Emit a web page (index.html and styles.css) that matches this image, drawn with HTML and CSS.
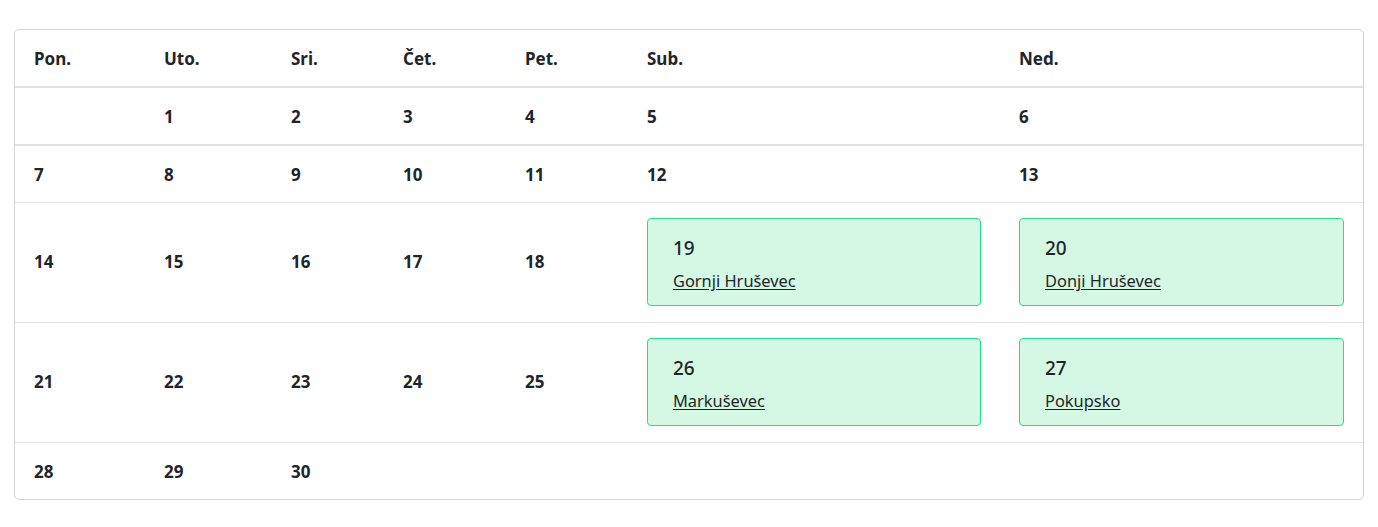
FILE: index.html
```html
<!DOCTYPE html>
<html lang="hr">
<head>
<meta charset="utf-8">
<title>Kalendar</title>
<link rel="stylesheet" href="styles.css">
</head>
<body>
<div class="card">
  <table class="cal">
    <colgroup>
      <col class="c1"><col class="c2"><col class="c3"><col class="c4"><col class="c5"><col class="c6"><col class="c7">
    </colgroup>
    <thead>
      <tr><th>Pon.</th><th>Uto.</th><th>Sri.</th><th>Čet.</th><th>Pet.</th><th>Sub.</th><th>Ned.</th></tr>
    </thead>
    <tbody class="first">
      <tr><td></td><td>1</td><td>2</td><td>3</td><td>4</td><td>5</td><td>6</td></tr>
    </tbody>
    <tbody>
      <tr><td>7</td><td>8</td><td>9</td><td>10</td><td>11</td><td>12</td><td>13</td></tr>
      <tr class="ev"><td>14</td><td>15</td><td>16</td><td>17</td><td>18</td>
        <td><div class="event"><div class="num">19</div><a href="#">Gornji Hruševec</a></div></td>
        <td><div class="event"><div class="num">20</div><a href="#">Donji Hruševec</a></div></td></tr>
      <tr class="ev"><td>21</td><td>22</td><td>23</td><td>24</td><td>25</td>
        <td><div class="event"><div class="num">26</div><a href="#">Markuševec</a></div></td>
        <td><div class="event"><div class="num">27</div><a href="#">Pokupsko</a></div></td></tr>
      <tr class="last"><td>28</td><td>29</td><td>30</td><td></td><td></td><td></td><td></td></tr>
    </tbody>
  </table>
</div>
</body>
</html>
```
FILE: styles.css
```css
* { box-sizing: border-box; }
html, body { margin: 0; background: #fff; }
body {
  padding: 29px 14px 0 14px;
  font-family: "Noto Sans", "Open Sans", sans-serif;
  color: #212529;
}
.card {
  border: 1px solid #d2d4d6;
  border-radius: 5px;
  width: 1350px;
  overflow: hidden;
}
.cal {
  width: 100%;
  border-collapse: collapse;
  table-layout: fixed;
}
.c1 { width: 130px; }
.c2 { width: 127px; }
.c3 { width: 112px; }
.c4 { width: 122px; }
.c5 { width: 122px; }
.c6 { width: 372px; }
.c7 { width: 363px; }
.cal th, .cal td {
  text-align: left;
  vertical-align: middle;
  padding: 17px 19px 15px;
  font-size: 17px;
  line-height: 24px;
  font-weight: 700;
  border-bottom: 1px solid #dee2e6;
}
.cal thead th,
.cal tbody.first td { border-bottom: 2px solid #dee2e6; }
.cal tr.ev td { padding-top: 15px; padding-bottom: 16px; }
.cal tr.last td { border-bottom: 0; }
.event {
  display: flex;
  flex-direction: column;
  align-items: flex-start;
  height: 88px;
  background: #d4f8e4;
  border: 1px solid #19e488;
  border-radius: 4px;
  padding: 16px 25px 0;
  font-weight: 400;
}
.event .num {
  font-size: 19px;
  line-height: 26px;
  font-weight: 500;
  margin-bottom: 8px;
}
.event a {
  color: #212529;
  text-decoration: underline;
  text-underline-offset: 2px;
  font-size: 16.4px;
  line-height: 24px;
}
```
